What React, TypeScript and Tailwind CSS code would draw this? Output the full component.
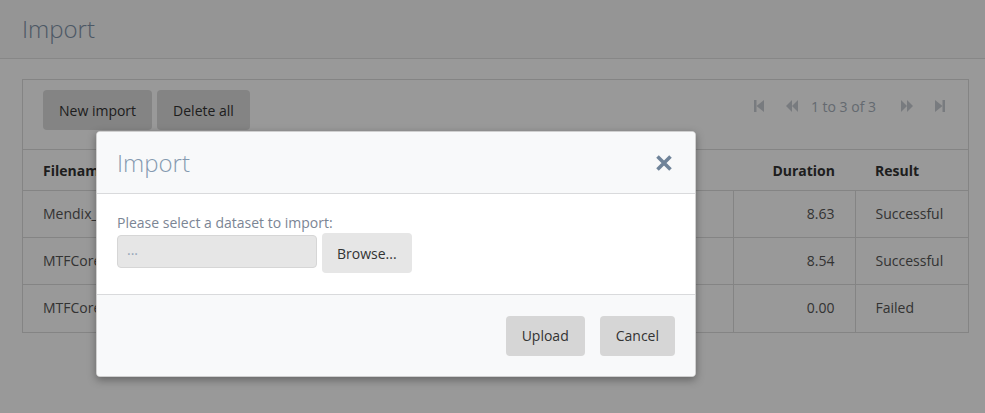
import React from "react";

const rows = [
  { file: "Mendix_export_2017.zip", date: "", duration: "8.63", result: "Successful" },
  { file: "MTFCore_data_01.zip", date: "", duration: "8.54", result: "Successful" },
  { file: "MTFCore_data_02.zip", date: "", duration: "0.00", result: "Failed" },
];

function StepBack() {
  return (
    <svg width="12" height="14" viewBox="0 0 12 14" className="fill-[#c9ced4]">
      <rect x="1" y="1" width="2.5" height="12" />
      <path d="M11 1v12L3.5 7z" />
    </svg>
  );
}

function Back() {
  return (
    <svg width="14" height="14" viewBox="0 0 14 14" className="fill-[#c9ced4]">
      <path d="M7 1v12L1 7z" />
      <path d="M13 1v12L7 7z" />
    </svg>
  );
}

function Fwd() {
  return (
    <svg width="14" height="14" viewBox="0 0 14 14" className="fill-[#c9ced4]">
      <path d="M1 1v12l6-6z" />
      <path d="M7 1v12l6-6z" />
    </svg>
  );
}

function StepFwd() {
  return (
    <svg width="12" height="14" viewBox="0 0 12 14" className="fill-[#c9ced4]">
      <path d="M1 1v12l7.5-6z" />
      <rect x="8.5" y="1" width="2.5" height="12" />
    </svg>
  );
}

export default function App() {
  return (
    <div
      className="relative h-[413px] w-[985px] overflow-hidden bg-white text-[14px] text-[#555]"
      style={{ fontFamily: '"Open Sans", "Liberation Sans", sans-serif' }}
    >
      <div className="h-[59px] border-b border-[#e2e2e2] bg-[#f8f8f9] px-[22px] pt-[13px]">
        <h1 className="text-[24px] font-light leading-[32px] text-[#7f93a9]">Import</h1>
      </div>

      <div className="ml-[22px] mr-[16px] mt-[20px] border border-[#dcdcdc]">
        <div className="flex h-[69px] items-start justify-between pl-[20px] pr-[22px] pt-[10px]">
          <div className="flex gap-[5px]">
            <button className="h-[40px] rounded-[4px] bg-[#dcdcdc] px-[16px] text-[#333]">New import</button>
            <button className="h-[40px] rounded-[4px] bg-[#dcdcdc] px-[16px] text-[#333]">Delete all</button>
          </div>
          <div className="flex h-[32px] items-center text-[#a7b0bb]">
            <span className="mr-[20px]"><StepBack /></span>
            <span className="mr-[12px]"><Back /></span>
            <span>1 to 3 of 3</span>
            <span className="ml-[24px] mr-[20px]"><Fwd /></span>
            <span><StepFwd /></span>
          </div>
        </div>
        <table className="w-full border-collapse">
          <thead>
            <tr className="h-[41px] border-t border-[#dcdcdc]">
              <th className="w-[380px] pl-[20px] text-left font-bold text-[#333]">Filename</th>
              <th className="text-left font-bold text-[#333]">Date</th>
              <th className="w-[122px] pr-[20px] text-right font-bold text-[#333]">Duration</th>
              <th className="w-[113px] pl-[20px] text-left font-bold text-[#333]">Result</th>
            </tr>
          </thead>
          <tbody>
            {rows.map((r) => (
              <tr key={r.file} className="h-[47px] border-t border-[#dcdcdc]">
                <td className="border-r border-[#dcdcdc] pl-[20px] pb-[2px]">{r.file}</td>
                <td className="border-r border-[#dcdcdc] pb-[2px]">{r.date}</td>
                <td className="border-r border-[#dcdcdc] pr-[20px] pb-[2px] text-right">{r.duration}</td>
                <td className="pl-[20px] pb-[2px]">{r.result}</td>
              </tr>
            ))}
          </tbody>
        </table>
      </div>

      <div className="absolute inset-0 bg-black/40" />

      <div className="absolute left-[96px] top-[131px] w-[600px] overflow-hidden rounded-[4px] border border-[#cfcfcf] bg-white shadow-[0_3px_9px_rgba(0,0,0,0.35)]">
        <div className="flex h-[62px] items-center justify-between border-b border-[#d9dadc] bg-[#f8f9fa] pl-[20px] pr-[22px]">
          <h2 className="text-[24px] font-light text-[#8599b0]">Import</h2>
          <svg width="18" height="18" viewBox="0 0 18 18">
            <path d="M2.5 2.5l13 13M15.5 2.5l-13 13" stroke="#6f8399" strokeWidth="3.6" strokeLinecap="butt" />
          </svg>
        </div>
        <div className="h-[101px] border-b border-[#d9dadc] px-[20px] pt-[19px]">
          <div className="leading-[20px] text-[#7b8594]">Please select a dataset to import:</div>
          <div className="flex items-start gap-[5px]">
            <div className="mt-[2px] flex h-[33px] w-[200px] items-center rounded-[4px] border border-[#d6d6d6] bg-[#e6e6e6] px-[9px] pb-[4px] text-[#95a5b8]">
              ...
            </div>
            <button className="h-[40px] rounded-[4px] bg-[#e6e6e6] px-[15px] text-[#333]">Browse...</button>
          </div>
        </div>
        <div className="flex h-[81px] items-center justify-end gap-[15px] bg-[#f8f9fa] pr-[20px]">
          <button className="h-[40px] rounded-[4px] bg-[#d6d6d6] px-[16px] text-[#333]">Upload</button>
          <button className="h-[40px] rounded-[4px] bg-[#d6d6d6] px-[16px] text-[#333]">Cancel</button>
        </div>
      </div>
    </div>
  );
}
